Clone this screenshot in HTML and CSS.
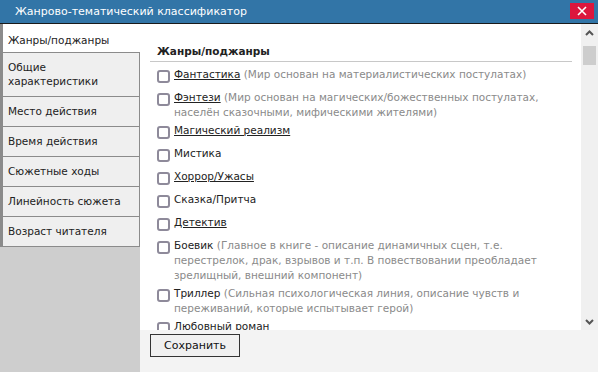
FILE: index.html
```html
<!DOCTYPE html>
<html lang="ru">
<head>
    <meta charset="UTF-8">
    <title>Жанрово-тематический классификатор</title>
    <link rel="stylesheet" href="styles.css">
</head>
<body>
    <div class="window">
        <div class="titlebar">
            <span class="title">Жанрово-тематический классификатор</span>
            <button class="close-btn">
                <svg width="10" height="10" viewBox="0 0 10 10"><path d="M1 1L9 9M9 1L1 9" stroke="#fff" stroke-width="1.6"/></svg>
            </button>
        </div>

        <div class="window-body">
            <div class="sidebar">
                <ul class="tabs">
                    <li class="tab active">Жанры/поджанры</li>
                    <li class="tab">Общие<br>характеристики</li>
                    <li class="tab">Место действия</li>
                    <li class="tab">Время действия</li>
                    <li class="tab">Сюжетные ходы</li>
                    <li class="tab">Линейность сюжета</li>
                    <li class="tab">Возраст читателя</li>
                </ul>
            </div>

            <div class="main">
                <div class="content">
                    <div class="genre-list">
                        <h3 class="section-title">Жанры/поджанры</h3>
                        <div class="item"><span class="check"></span><p class="label"><a href="#">Фантастика</a> <span class="note">(Мир основан на материалистических постулатах)</span></p></div>
                        <div class="item"><span class="check"></span><p class="label"><a href="#">Фэнтези</a> <span class="note">(Мир основан на магических/божественных постулатах, населён сказочными, мифическими жителями)</span></p></div>
                        <div class="item"><span class="check"></span><p class="label"><a href="#">Магический реализм</a></p></div>
                        <div class="item"><span class="check"></span><p class="label">Мистика</p></div>
                        <div class="item"><span class="check"></span><p class="label"><a href="#">Хоррор/Ужасы</a></p></div>
                        <div class="item"><span class="check"></span><p class="label">Сказка/Притча</p></div>
                        <div class="item"><span class="check"></span><p class="label"><a href="#">Детектив</a></p></div>
                        <div class="item"><span class="check"></span><p class="label">Боевик <span class="note">(Главное в книге - описание динамичных сцен, т.е. перестрелок, драк, взрывов и т.п. В повествовании преобладает зрелищный, внешний компонент)</span></p></div>
                        <div class="item"><span class="check"></span><p class="label">Триллер <span class="note">(Сильная психологическая линия, описание чувств и переживаний, которые испытывает герой)</span></p></div>
                        <div class="item"><span class="check"></span><p class="label">Любовный роман</p></div>
                    </div>
                    <div class="scrollbar">
                        <div class="scroll-arrow">
                            <svg width="9" height="6" viewBox="0 0 9 6"><path d="M1 5L4.5 1.5L8 5" fill="none" stroke="#555" stroke-width="2"/></svg>
                        </div>
                        <div class="scroll-track">
                            <div class="scroll-thumb"></div>
                        </div>
                        <div class="scroll-arrow">
                            <svg width="9" height="6" viewBox="0 0 9 6"><path d="M1 1L4.5 4.5L8 1" fill="none" stroke="#555" stroke-width="2"/></svg>
                        </div>
                    </div>
                </div>
                <div class="footer">
                    <button class="save-btn">Сохранить</button>
                </div>
            </div>
        </div>
    </div>
</body>
</html>
```

FILE: styles.css
```css
* {
    box-sizing: border-box;
    margin: 0;
    padding: 0;
}

body {
    font-family: "DejaVu Sans", Verdana, sans-serif;
    font-size: 10.5px;
    color: #222;
    background-color: #fff;
}

.window {
    width: 598px;
    height: 372px;
    display: flex;
    flex-direction: column;
    overflow: hidden;
}

/* Title bar */
.titlebar {
    height: 24px;
    background-color: #3275a7;
    border-bottom: 1px solid #1a1a1a;
    display: flex;
    align-items: center;
    justify-content: space-between;
    padding: 0 4px 1px 15px;
}

.title {
    color: #fff;
    font-size: 11px;
}

.close-btn {
    width: 24px;
    height: 16px;
    background-color: #dc163d;
    border: none;
    display: flex;
    align-items: center;
    justify-content: center;
}

.window-body {
    flex: 1;
    display: flex;
    min-height: 0;
}

/* Left tabs */
.sidebar {
    width: 140px;
    background-color: #cecece;
}

.tabs {
    list-style: none;
    border-left: 3px solid #8b8b8b;
    border-bottom: 1px solid #8b8b8b;
}

.tab {
    padding: 7px 5px 8px;
    line-height: 14px;
    color: #222;
    background-color: #efefef;
    border-top: 1px solid #8b8b8b;
    border-right: 1px solid #8b8b8b;
}

.tab.active {
    background-color: #fff;
    border: none;
    padding: 9px 5px 5px;
}

/* Main area */
.main {
    flex: 1;
    display: flex;
    flex-direction: column;
    min-width: 0;
}

.content {
    flex: 1;
    display: flex;
    min-height: 0;
}

.genre-list {
    flex: 1;
    overflow: hidden;
    padding: 20px 9px 0 10px;
}

.section-title {
    font-size: 10.5px;
    font-weight: bold;
    line-height: 15px;
    padding: 0 0 2px 7px;
    border-bottom: 1px solid #c8c8c8;
    margin-bottom: 5px;
}

.item {
    display: flex;
    align-items: flex-start;
    min-height: 20px;
    margin-bottom: 3px;
    padding-left: 7px;
}

.check {
    flex-shrink: 0;
    width: 13px;
    height: 13px;
    margin: 3px 4px 0 0;
    border: 2px solid #8e8a9a;
    border-radius: 3px;
    background-color: #fff;
}

.label {
    line-height: 15px;
    color: #222;
}

.label a {
    color: #222;
    text-decoration: underline;
}

.note {
    color: #8a8a8a;
}

/* Scrollbar */
.scrollbar {
    width: 17px;
    background-color: #f0f0f0;
    display: flex;
    flex-direction: column;
}

.scroll-arrow {
    height: 17px;
    display: flex;
    align-items: center;
    justify-content: center;
}

.scroll-track {
    flex: 1;
    padding-top: 5px;
}

.scroll-thumb {
    height: 19px;
    margin: 0 2px;
    background-color: #cdcdcd;
}

/* Footer */
.footer {
    height: 42px;
    background-color: #f3f3f3;
    padding: 4px 10px;
}

.save-btn {
    width: 90px;
    height: 23px;
    font-family: "DejaVu Sans", Verdana, sans-serif;
    font-size: 11px;
    color: #111;
    background-color: #f0f0f0;
    border: 1px solid #333;
}
```
